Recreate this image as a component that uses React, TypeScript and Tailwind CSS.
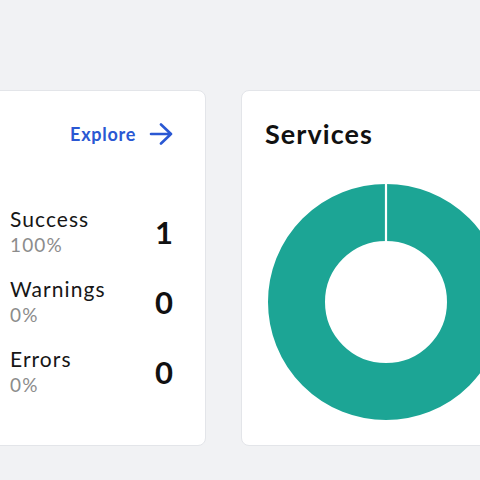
const font = { fontFamily: "Lato, 'Noto Sans', sans-serif" };

interface StatRowProps {
  label: string;
  percent: string;
  count: number;
}

function StatRow({ label, percent, count }: StatRowProps) {
  return (
    <div className="flex items-center justify-between">
      <div className="flex flex-col">
        <span className="text-[21px] leading-[26px] tracking-[0.05em] text-[#161616]">{label}</span>
        <span className="text-[19px] leading-[26px] tracking-[0.06em] text-[#8c8c8c]">{percent}</span>
      </div>
      <span className="text-[31px] leading-none font-bold text-[#111111]">{count}</span>
    </div>
  );
}

function ArrowRight() {
  return (
    <svg width="24" height="22" viewBox="0 0 24 22" fill="none" aria-hidden="true">
      <path
        d="M2 11h20M12 1.5l10 9.5-10 9.5"
        stroke="#2a58d3"
        strokeWidth="2.6"
        strokeLinecap="round"
        strokeLinejoin="round"
      />
    </svg>
  );
}

function Donut() {
  return (
    <svg width="238" height="238" viewBox="0 0 238 238" aria-hidden="true">
      {/* outer 118, inner 61 */}
      <circle cx="119" cy="119" r="89.5" fill="none" stroke="#1ca595" strokeWidth="57" />
      <line x1="119" y1="0" x2="119" y2="59" stroke="#ffffff" strokeWidth="2.2" />
    </svg>
  );
}

export default function App() {
  return (
    <div className="w-[480px] h-[480px] overflow-hidden bg-[#f1f2f4]" style={font}>
      <div className="flex gap-[35px] pt-[90px] ml-[-24px] h-[446px]">
        {/* Status card */}
        <div className="w-[230px] shrink-0 bg-white border border-[#e3e5e9] rounded-lg pl-[33px] pr-[32px] pt-[27px]">
          <div className="flex justify-end items-center gap-[13px] h-8">
            <span className="text-[18px] font-bold tracking-[0.04em] text-[#2a58d3]">Explore</span>
            <ArrowRight />
          </div>
          <div className="flex flex-col gap-[18px] mt-[56px]">
            <StatRow label="Success" percent="100%" count={1} />
            <StatRow label="Warnings" percent="0%" count={0} />
            <StatRow label="Errors" percent="0%" count={0} />
          </div>
        </div>

        {/* Services card */}
        <div className="w-[280px] shrink-0 bg-white border border-[#e3e5e9] rounded-lg pl-[23px] pt-[27px]">
          <h2 className="text-[27px] leading-8 font-bold tracking-[0.04em] text-[#111111]">Services</h2>
          <div className="mt-[33px] ml-[2px]">
            <Donut />
          </div>
        </div>
      </div>
    </div>
  );
}
